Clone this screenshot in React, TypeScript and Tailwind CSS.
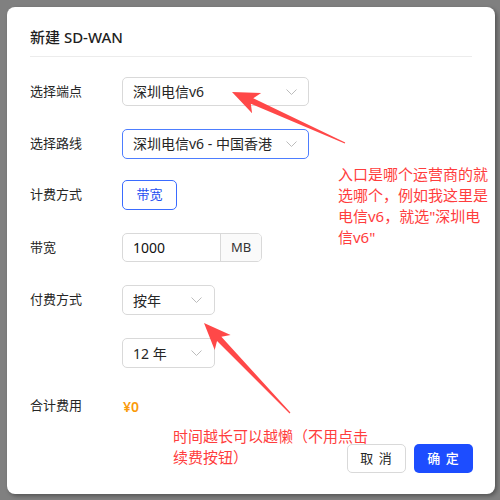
import React from "react";

const FONT = { fontFamily: '"Noto Sans", "Noto Sans CJK SC", sans-serif' };

function Chevron() {
  return (
    <svg width="11" height="6" viewBox="0 0 11 6" className="shrink-0">
      <polyline points="0.5,0.5 5.5,5.5 10.5,0.5" fill="none" stroke="#bcbcbc" strokeWidth="1" />
    </svg>
  );
}

function arrowPoints(sx: number, sy: number, tx: number, ty: number) {
  const dx = tx - sx;
  const dy = ty - sy;
  const len = Math.hypot(dx, dy);
  const ux = dx / len;
  const uy = dy / len;
  const px = -uy;
  const py = ux;
  const headLen = 27;
  const headHalf = 11;
  const shaftHalf = 3;
  const bx = tx - ux * headLen;
  const by = ty - uy * headLen;
  const jx = bx + ux * 5;
  const jy = by + uy * 5;
  const pts = [
    [tx, ty],
    [bx + px * headHalf, by + py * headHalf],
    [jx + px * shaftHalf, jy + py * shaftHalf],
    [sx + px * 0.6, sy + py * 0.6],
    [sx - px * 0.6, sy - py * 0.6],
    [jx - px * shaftHalf, jy - py * shaftHalf],
    [bx - px * headHalf, by - py * headHalf],
  ];
  return pts.map((p) => p.join(",")).join(" ");
}

function Row({ label, children }: { label: string; children?: React.ReactNode }) {
  return (
    <div className="flex items-center h-[29px]">
      <div className="w-[92px] text-[13px] text-[#262626]">{label}</div>
      {children}
    </div>
  );
}

export default function App() {
  return (
    <div className="relative w-[500px] h-[500px] bg-[#808080] overflow-hidden" style={FONT}>
      <div className="absolute left-[7px] top-[7px] w-[488px] h-[487px] bg-white rounded-[8px] shadow-[2px_2px_4px_rgba(0,0,0,0.35)] flex flex-col">
        <div className="px-[23px] pt-[20px] pb-[9px] text-[15px] leading-[20px] text-[#1f1f1f] font-medium">
          新建 SD-WAN
        </div>
        <div className="mx-[23px] h-px bg-[#ececec]" />
        <div className="flex flex-col px-[23px] pt-[20px]">
          <Row label="选择端点">
            <div className="w-[187px] h-[29px] border border-[#d9d9d9] rounded-[5px] flex items-center justify-between pl-[10px] pr-[11px] text-[14px] text-[#262626]">
              <span>深圳电信v6</span>
              <Chevron />
            </div>
          </Row>
          <div className="h-[23px]" />
          <Row label="选择路线">
            <div className="w-[187px] h-[30px] border border-[#4d7dff] rounded-[5px] flex items-center justify-between pl-[10px] pr-[11px] text-[14px] text-[#262626]">
              <span>深圳电信v6 - 中国香港</span>
              <Chevron />
            </div>
          </Row>
          <div className="h-[22px]" />
          <div className="flex items-center h-[30px]">
            <div className="w-[92px] text-[13px] text-[#262626]">计费方式</div>
            <div className="w-[55px] h-[30px] border border-[#3a6bff] rounded-[5px] flex items-center justify-center text-[13px] text-[#2450f0]">
              带宽
            </div>
          </div>
          <div className="h-[23px]" />
          <Row label="带宽">
            <div className="w-[140px] h-[29px] border border-[#d9d9d9] rounded-[5px] flex overflow-hidden">
              <div className="flex-1 flex items-center pl-[10px] text-[14px] text-[#111]">1000</div>
              <div className="w-[41px] border-l border-[#d9d9d9] bg-[#fafafa] flex items-center justify-center text-[13px] text-[#333]">
                MB
              </div>
            </div>
          </Row>
          <div className="h-[23px]" />
          <div className="flex items-center h-[30px]">
            <div className="w-[92px] text-[13px] text-[#262626]">付费方式</div>
            <div className="w-[93px] h-[30px] border border-[#d9d9d9] rounded-[5px] flex items-center justify-between pl-[10px] pr-[12px] text-[14px] text-[#262626]">
              <span>按年</span>
              <Chevron />
            </div>
          </div>
          <div className="h-[23px]" />
          <div className="flex items-center h-[30px]">
            <div className="w-[92px]" />
            <div className="w-[93px] h-[30px] border border-[#d9d9d9] rounded-[5px] flex items-center justify-between pl-[10px] pr-[12px] text-[14px] text-[#262626]">
              <span>12 年</span>
              <Chevron />
            </div>
          </div>
          <div className="h-[23px]" />
          <div className="flex items-center h-[30px]">
            <div className="w-[93px] text-[13px] text-[#262626]">合计费用</div>
            <div className="text-[14px] font-semibold text-[#fa9a0a]">¥0</div>
          </div>
        </div>
        <div className="flex justify-end gap-[8px] px-[22px] mt-[23px]">
          <div className="w-[59px] h-[29px] border border-[#d9d9d9] rounded-[5px] flex items-center justify-center text-[13px] text-[#262626] tracking-[1px]">
            取 消
          </div>
          <div className="w-[59px] h-[29px] bg-[#1d4dff] rounded-[5px] flex items-center justify-center text-[13px] text-white font-medium tracking-[1px]">
            确 定
          </div>
        </div>
      </div>

      <div className="absolute left-[338px] top-[164px] text-[15px] leading-[21px] text-[#ff3d3d] whitespace-nowrap">
        入口是哪个运营商的就
        <br />
        选哪个，例如我这里是
        <br />
        电信v6，就选"深圳电
        <br />
        信v6"
      </div>
      <div className="absolute left-[173px] top-[426px] text-[15px] leading-[21px] text-[#ff3d3d] whitespace-nowrap">
        时间越长可以越懒（不用点击
        <br />
        续费按钮）
      </div>

      <svg className="absolute left-0 top-0 pointer-events-none" width="500" height="500" viewBox="0 0 500 500">
        <polygon points={arrowPoints(345, 143, 232, 92)} fill="#ff4848" />
        <polygon points={arrowPoints(290, 413, 204, 323)} fill="#ff4848" />
      </svg>
    </div>
  );
}
